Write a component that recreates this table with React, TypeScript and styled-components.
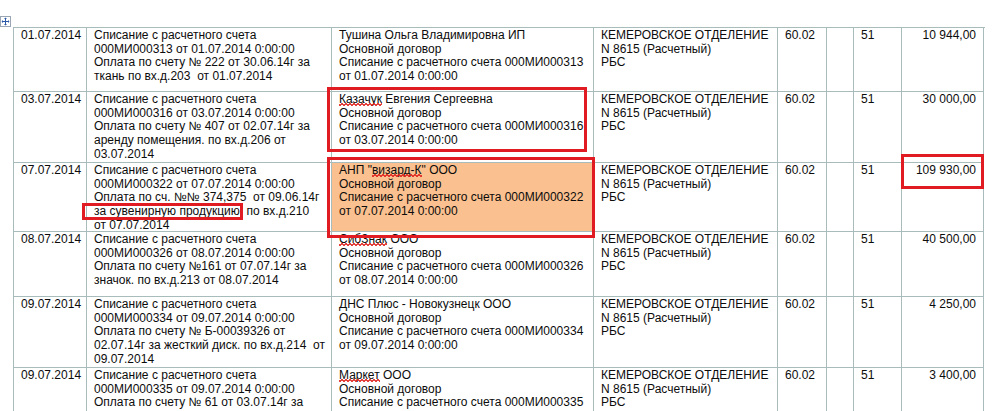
import React from 'react';
import styled, { createGlobalStyle } from 'styled-components';

const GlobalStyle = createGlobalStyle`
  html, body {
    margin: 0;
    padding: 0;
    background: #ffffff;
  }
  body {
    font-family: "Liberation Sans", Arial, sans-serif;
    font-size: 12px;
    color: #0c0c0c;
  }
`;

const COLS = '73px 245px 262px 184px 49px 27px 48px 82px';
const GRID = '#a9bcbc';

const Page = styled.div`
  position: relative;
  display: flex;
  flex-direction: column;
  width: 993px;
  height: 411px;
  overflow: hidden;
`;

const TopBar = styled.div`
  height: 28px;
  display: flex;
  align-items: flex-start;
`;

const Handle = styled.svg`
  margin-top: 16px;
  width: 11px;
  height: 11px;
  display: block;
`;

const Table = styled.div`
  margin-left: 13px;
  width: 971px;
  border-left: 1px solid ${GRID};
  border-top: 1px solid ${GRID};
  display: flex;
  flex-direction: column;
`;

const Row = styled.div<{ $h: number }>`
  display: grid;
  grid-template-columns: ${COLS};
  height: ${(p) => p.$h}px;
`;

const Cell = styled.div<{ $align?: 'left' | 'right'; $fill?: string }>`
  box-sizing: border-box;
  border-right: 1px solid ${GRID};
  border-bottom: 1px solid ${GRID};
  padding: 1px 7px 0 7px;
  text-align: ${(p) => p.$align ?? 'left'};
  background: ${(p) => p.$fill ?? 'transparent'};
  overflow: hidden;
  line-height: 13.7px;
`;

const Line = styled.div`
  white-space: pre;
`;

const Squiggle = styled.span<{ $color?: string }>`
  position: relative;
  &::after {
    content: '';
    position: absolute;
    left: 0;
    right: 0;
    top: 11px;
    height: 3px;
    background:
      linear-gradient(135deg, transparent 35%, ${(p) => p.$color ?? '#e0201c'} 35%, ${(p) => p.$color ?? '#e0201c'} 65%, transparent 65%) 0 0 / 4px 3px repeat-x,
      linear-gradient(45deg, transparent 35%, ${(p) => p.$color ?? '#e0201c'} 35%, ${(p) => p.$color ?? '#e0201c'} 65%, transparent 65%) 2px 0 / 4px 3px repeat-x;
    opacity: 0.85;
  }
`;

const Mark = styled.div`
  position: absolute;
  box-sizing: border-box;
  border: 3px solid #e01b22;
  pointer-events: none;
`;

type RowData = {
  h: number;
  date: string;
  doc: React.ReactNode[];
  party: React.ReactNode[];
  amount: string;
  fill?: string;
};

const BANK = ['КЕМЕРОВСКОЕ ОТДЕЛЕНИЕ', 'N 8615 (Расчетный)', 'РБС'];

const rows: RowData[] = [
  {
    h: 64,
    date: '01.07.2014',
    doc: [
      'Списание с расчетного счета',
      '000МИ000313 от 01.07.2014 0:00:00',
      'Оплата по счету № 222 от 30.06.14г за',
      'ткань по вх.д.203  от 01.07.2014',
    ],
    party: [
      'Тушина Ольга Владимировна ИП',
      'Основной договор',
      'Списание с расчетного счета 000МИ000313',
      'от 01.07.2014 0:00:00',
    ],
    amount: '10 944,00',
  },
  {
    h: 71,
    date: '03.07.2014',
    doc: [
      'Списание с расчетного счета',
      '000МИ000316 от 03.07.2014 0:00:00',
      'Оплата по счету № 407 от 02.07.14г за',
      'аренду помещения. по вх.д.206 от',
      '03.07.2014',
    ],
    party: [
      <>
        <Squiggle>Казачук</Squiggle> Евгения Сергеевна
      </>,
      'Основной договор',
      'Списание с расчетного счета 000МИ000316',
      'от 03.07.2014 0:00:00',
    ],
    amount: '30 000,00',
  },
  {
    h: 69,
    date: '07.07.2014',
    doc: [
      'Списание с расчетного счета',
      '000МИ000322 от 07.07.2014 0:00:00',
      'Оплата по сч. №№ 374,375  от 09.06.14г',
      <>
        за сувенирную продукцию<Squiggle $color="#3a9a3a">.</Squiggle> по вх.д.210
      </>,
      'от 07.07.2014',
    ],
    party: [
      <>
        АНП "<Squiggle>визард-К</Squiggle>" ООО
      </>,
      'Основной договор',
      'Списание с расчетного счета 000МИ000322',
      'от 07.07.2014 0:00:00',
    ],
    amount: '109 930,00',
    fill: '#fac08f',
  },
  {
    h: 65,
    date: '08.07.2014',
    doc: [
      'Списание с расчетного счета',
      '000МИ000326 от 08.07.2014 0:00:00',
      'Оплата по счету №161 от 07.07.14г за',
      'значок. по вх.д.213 от 08.07.2014',
    ],
    party: [
      <>
        <Squiggle>СибЗнак</Squiggle> ООО
      </>,
      'Основной договор',
      'Списание с расчетного счета 000МИ000326',
      'от 08.07.2014 0:00:00',
    ],
    amount: '40 500,00',
  },
  {
    h: 71,
    date: '09.07.2014',
    doc: [
      'Списание с расчетного счета',
      '000МИ000334 от 09.07.2014 0:00:00',
      'Оплата по счету № Б-00039326 от',
      '02.07.14г за жесткий диск. по вх.д.214  от',
      '09.07.2014',
    ],
    party: [
      'ДНС Плюс - Новокузнецк ООО',
      'Основной договор',
      'Списание с расчетного счета 000МИ000334',
      'от 09.07.2014 0:00:00',
    ],
    amount: '4 250,00',
  },
  {
    h: 80,
    date: '09.07.2014',
    doc: [
      'Списание с расчетного счета',
      '000МИ000335 от 09.07.2014 0:00:00',
      'Оплата по счету № 61 от 03.07.14г за',
      'канцтовары. по вх.д.215 от 09.07.2014',
      '09.07.2014',
    ],
    party: [
      <>
        <Squiggle>Маркет</Squiggle> ООО
      </>,
      'Основной договор',
      'Списание с расчетного счета 000МИ000335',
      'от 09.07.2014 0:00:00',
    ],
    amount: '3 400,00',
  },
];

const Lines: React.FC<{ items: React.ReactNode[] }> = ({ items }) => (
  <>
    {items.map((t, i) => (
      <Line key={i}>{t}</Line>
    ))}
  </>
);

export default function App() {
  return (
    <>
      <GlobalStyle />
      <Page>
        <TopBar>
          <Handle viewBox="0 0 11 11">
            <rect x="0.5" y="0.5" width="10" height="10" fill="#ffffff" stroke="#9aa6b4" />
            <path d="M5.5 2 V9 M2 5.5 H9" stroke="#2a57a8" strokeWidth="1" />
            <path d="M5.5 1.5 L4 3 H7 Z M5.5 9.5 L4 8 H7 Z M1.5 5.5 L3 4 V7 Z M9.5 5.5 L8 4 V7 Z" fill="#2a57a8" />
          </Handle>
        </TopBar>
        <Table>
          {rows.map((r, i) => (
            <Row key={i} $h={r.h}>
              <Cell>{r.date}</Cell>
              <Cell>
                <Lines items={r.doc} />
              </Cell>
              <Cell $fill={r.fill}>
                <Lines items={r.party} />
              </Cell>
              <Cell>
                <Lines items={BANK} />
              </Cell>
              <Cell>60.02</Cell>
              <Cell />
              <Cell>51</Cell>
              <Cell $align="right">{r.amount}</Cell>
            </Row>
          ))}
        </Table>
        <Mark style={{ left: 327, top: 87, width: 260, height: 65 }} />
        <Mark style={{ left: 327, top: 157, width: 268, height: 81 }} />
        <Mark style={{ left: 82, top: 203, width: 161, height: 17 }} />
        <Mark style={{ left: 901, top: 154, width: 83, height: 35 }} />
      </Page>
    </>
  );
}
